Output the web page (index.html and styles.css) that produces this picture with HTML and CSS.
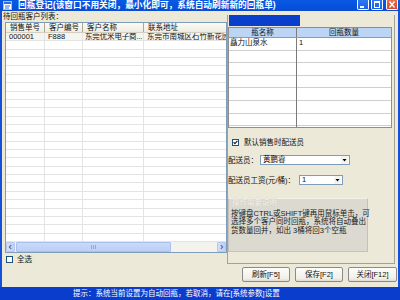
FILE: index.html
```html
<!DOCTYPE html>
<html lang="zh-CN">
  <head>
    <meta charset="utf-8">
    <title>回瓶登记</title>
    <link rel="stylesheet" href="styles.css">
  </head>
  <body>
    <div class="window">
      <div class="titlebar">
        <svg class="app-icon" viewBox="0 0 9 9">
          <rect x="0.5" y="0.5" width="8" height="8" fill="#fff" stroke="#9cc0f8"/>
          <rect x="1" y="1" width="7" height="2" fill="#2e6fe6"/>
          <path d="M2 5h5M2 7h4" stroke="#2e6fe6" stroke-width="1"/>
        </svg>
        <div class="title">回瓶登记(该窗口不用关闭，最小化即可，系统自动刷新新的回瓶单)</div>
        <div class="caption-buttons">
          <div class="cap-btn">
            <svg viewBox="0 0 10 8"><rect x="2" y="5" width="4" height="2" fill="#fff"/></svg>
          </div>
          <div class="cap-btn">
            <svg viewBox="0 0 10 8"><rect x="2.5" y="0.5" width="5" height="6" fill="none" stroke="#fff"/><rect x="2" y="0" width="6" height="2" fill="#fff"/></svg>
          </div>
          <div class="cap-btn close">
            <svg viewBox="0 0 10 8"><path d="M2.5 0.5l5 6M7.5 0.5l-5 6" stroke="#fff" stroke-width="1.4"/></svg>
          </div>
        </div>
      </div>

      <div class="frame">
        <div class="panes">
          <div class="left">
            <div class="list-label">待回瓶客户列表：</div>
            <div class="listview">
              <div class="lv-head">
                <div class="lv-col">销售单号</div>
                <div class="lv-col">客户编号</div>
                <div class="lv-col">客户名称</div>
                <div class="lv-col">联系地址</div>
              </div>
              <div class="lv-body">
                <div class="lv-row">
                  <div class="lv-cell">000001</div>
                  <div class="lv-cell">F888</div>
                  <div class="lv-cell lv-cell-short">东莞优米电子商...</div>
                  <div class="lv-cell">东莞市南城区石竹新花园</div>
                </div>
              </div>
              <div class="hscroll">
                <div class="sb-btn">
                  <svg viewBox="0 0 9 9"><path d="M5.5 2L3 4.5 5.5 7" fill="none" stroke="#4d6185" stroke-width="1.3"/></svg>
                </div>
                <div class="sb-thumb"><span class="grip"></span></div>
                <div class="sb-track"></div>
                <div class="sb-btn">
                  <svg viewBox="0 0 9 9"><path d="M3.5 2L6 4.5 3.5 7" fill="none" stroke="#4d6185" stroke-width="1.3"/></svg>
                </div>
              </div>
            </div>
            <label class="check-row select-all">
              <span class="checkbox"></span>全选
            </label>
          </div>

          <div class="right">
            <div class="grid-caption"></div>
            <div class="grid">
              <div class="grid-head">
                <div class="gh-col">瓶名称</div>
                <div class="gh-col">回瓶数量</div>
              </div>
              <div class="grid-body">
                <div class="grid-row">
                  <div class="gr-cell">矗力山泉水</div>
                  <div class="gr-cell">1</div>
                </div>
              </div>
            </div>

            <label class="check-row default-check">
              <span class="checkbox">
                <svg viewBox="0 0 5 5"><path d="M0.6 2.2l1.3 1.4L4.4 0.9" fill="none" stroke="#1a1a1a" stroke-width="1.1"/></svg>
              </span>默认销售时配送员
            </label>

            <div class="field field-driver">
              <span class="field-label">配送员：</span>
              <div class="combo combo-wide">
                <span class="combo-value">黄鹏睿</span>
                <span class="combo-btn"><svg viewBox="0 0 7 8"><path d="M1.5 3h4L3.5 5.5z" fill="#000"/></svg></span>
              </div>
            </div>

            <div class="field field-wage">
              <span class="field-label">配送员工资(元/桶)：</span>
              <div class="combo combo-narrow">
                <span class="combo-value">1</span>
                <span class="combo-btn"><svg viewBox="0 0 7 8"><path d="M1.5 3h4L3.5 5.5z" fill="#000"/></svg></span>
              </div>
            </div>

            <div class="group">
              <div class="group-title">操作简要说明</div>
              <p>按键盘CTRL或SHIFT键再用鼠标单击，可<br>选择多个客户同时回瓶，系统将自动叠出<br>货数量回并，如出 3桶将回3个空瓶</p>
            </div>
          </div>
        </div>

        <div class="actions">
          <button class="btn">刷新[F5]</button>
          <button class="btn">保存[F2]</button>
          <button class="btn btn-close">关闭[F12]</button>
        </div>
      </div>

      <div class="statusbar">提示：系统当前设置为自动回瓶，若取消，请在[系统参数]设置</div>
    </div>
  </body>
</html>
```

FILE: styles.css
```css
* {
  box-sizing: border-box;
}

html, body {
  margin: 0;
  padding: 0;
}

body {
  font: 7.5px/1.2 "Liberation Sans", "Noto Sans CJK SC", sans-serif;
  color: #111;
}

.window {
  width: 400px;
  height: 300px;
  display: flex;
  flex-direction: column;
  background: #ece9d8;
  overflow: hidden;
}

/* title bar */

.titlebar {
  height: 11px;
  flex: none;
  display: flex;
  align-items: flex-start;
  padding: 0 2px 0 3px;
  background: linear-gradient(#0b58e2, #0653de 50%, #0a4bd2);
  color: #fff;
  font-weight: bold;
  font-size: 8.7px;
  line-height: 10px;
}

.app-icon {
  width: 9px;
  height: 9px;
  margin: 1px 6px 0 0;
  flex: none;
}

.title {
  flex: 1;
  white-space: nowrap;
  overflow: hidden;
}

.caption-buttons {
  display: flex;
  gap: 2px;
}

.cap-btn {
  width: 12px;
  height: 10px;
  border: 1px solid #fff;
  border-top: 0;
  border-radius: 0 0 2px 2px;
  background: linear-gradient(#2f78f4, #1a5ee6);
}

.cap-btn svg {
  display: block;
  width: 10px;
  height: 8px;
  margin-top: 1px;
}

.cap-btn.close {
  margin-left: 1px;
  background: linear-gradient(#e8704f, #d94a26);
}

/* window body */

.frame {
  flex: 1;
  display: flex;
  flex-direction: column;
  border-left: 2px solid #1550d8;
  border-right: 2px solid #1550d8;
}

.panes {
  height: 253px;
  display: flex;
}

.left {
  width: 225px;
  padding-left: 3px;
  display: flex;
  flex-direction: column;
}

.list-label {
  height: 11px;
  line-height: 11px;
  margin-left: -2px;
}

.listview {
  height: 231px;
  border: 1px solid #7f9db9;
  background: #fff;
  display: flex;
  flex-direction: column;
  overflow: hidden;
}

.lv-head,
.lv-row {
  display: grid;
  grid-template-columns: 39px 38px 61px 100px;
  white-space: nowrap;
}

.lv-head {
  height: 10px;
  flex: none;
  background: linear-gradient(#fbfaf4, #efede2);
  border-bottom: 1px solid #d2cfc0;
  line-height: 9px;
}

.lv-col {
  padding-left: 4px;
  border-right: 1px solid #aca899;
  overflow: hidden;
}

.lv-body {
  flex: 1;
  background:
    linear-gradient(#e4e4e4, #e4e4e4) 38px 0 / 1px 100% no-repeat,
    linear-gradient(#e4e4e4, #e4e4e4) 76px 0 / 1px 100% no-repeat,
    linear-gradient(#e4e4e4, #e4e4e4) 137px 0 / 1px 100% no-repeat,
    repeating-linear-gradient(transparent 0 7.36px, #e4e4e4 7.36px 8.36px);
}

.lv-row {
  height: 8.36px;
  line-height: 8px;
  background: #f5f4ef;
  border-bottom: 1px solid #e4e4e4;
}

.lv-cell {
  padding-left: 3px;
  border-right: 1px solid #e4e4e4;
  overflow: hidden;
}

.lv-cell-short {
  padding-left: 2px;
  letter-spacing: -0.15px;
}

.hscroll {
  height: 10px;
  flex: none;
  display: flex;
  background: #f3f2ec;
}

.sb-btn {
  width: 9px;
  background: linear-gradient(90deg, #d4e0fa, #bccff6);
  border: 1px solid #b6c9f2;
  border-radius: 1px;
}

.sb-btn svg {
  display: block;
  width: 7px;
  height: 8px;
}

.sb-thumb {
  width: 155px;
  margin-left: 1px;
  background: linear-gradient(#cad9f8, #bcd0f5);
  border: 1px solid #a9c0ef;
  border-radius: 1px;
  display: flex;
  justify-content: center;
  align-items: center;
}

.grip {
  width: 5px;
  height: 4px;
  background: repeating-linear-gradient(90deg, #8fa9e0 0 1px, transparent 1px 2px);
}

.sb-track {
  flex: 1;
}

.check-row {
  display: flex;
  align-items: center;
}

.checkbox {
  width: 7px;
  height: 7px;
  border: 1px solid #1c5180;
  background: #fff;
  flex: none;
}

.checkbox svg {
  display: block;
  width: 5px;
  height: 5px;
}

.select-all {
  height: 11px;
  padding: 1px 0 0 1px;
  gap: 4px;
}

/* right side */

.right {
  width: 168px;
  margin-top: 4px;
  height: 249px;
  border: 1px solid #a5a294;
  border-top: 0;
  padding-right: 2px;
  display: flex;
  flex-direction: column;
}

.grid-caption {
  width: 71px;
  height: 11px;
  margin-left: 1px;
  background: #0a3fcc;
}

.grid {
  margin-top: 1px;
  height: 101px;
  border: 1px solid #8e8e8e;
  background: #fff;
  display: flex;
  flex-direction: column;
}

.grid-head,
.grid-row {
  display: grid;
  grid-template-columns: 68px 1fr;
}

.grid-head {
  height: 10px;
  line-height: 9px;
  background: #bdd5f5;
  border-bottom: 1px solid #9a9a9a;
  text-align: center;
}

.gh-col:first-child {
  border-right: 1px solid #7b7b7b;
}

.grid-body {
  flex: 1;
  background:
    linear-gradient(#7b7b7b, #7b7b7b) 67px 0 / 1px 100% no-repeat,
    repeating-linear-gradient(transparent 0 11.6px, #cfcfcf 11.6px 12.6px);
}

.grid-row {
  height: 12.6px;
  line-height: 9px;
}

.gr-cell {
  padding-left: 1px;
}

.gr-cell:last-child {
  padding-left: 2px;
}

.default-check {
  margin-top: 10px;
  height: 9px;
  padding-left: 4px;
  gap: 5px;
}

.field {
  display: flex;
  align-items: center;
  height: 10px;
}

.field-driver {
  margin-top: 8px;
}

.field-wage {
  margin-top: 10px;
}

.field-driver .field-label {
  width: 32px;
}

.field-wage .field-label {
  width: 71px;
}

.combo {
  height: 10px;
  display: flex;
  border: 1px solid #7f9db9;
  background: #fff;
}

.combo-wide {
  width: 90px;
}

.combo-narrow {
  width: 44px;
}

.combo-value {
  flex: 1;
  padding-left: 2px;
  line-height: 8px;
}

.combo-btn {
  width: 7px;
  margin-right: 1px;
  background: #f4f4f0;
}

.combo-btn svg {
  display: block;
  width: 7px;
  height: 8px;
}

.group {
  margin-top: 13px;
  width: 140px;
  height: 54px;
  padding: 0 2px;
  border: 1px solid #c6c3b6;
  border-top-color: #f2f1ea;
  background: #dcdad0;
}

.group-title {
  padding-left: 1px;
  line-height: 8px;
  color: #f8f7f2;
  text-shadow: 0 0 1px #b8b6aa;
}

.group p {
  margin: 3px 0 0;
  line-height: 8.4px;
  white-space: nowrap;
  color: #1a1a1a;
}

/* bottom buttons */

.actions {
  flex: 1;
  display: flex;
  justify-content: flex-end;
  align-items: flex-start;
  gap: 5px;
  padding: 3px 1px 0 0;
}

.btn {
  width: 48px;
  height: 15px;
  padding: 0;
  font: inherit;
  color: #111;
  border: 1px solid #8a8a8a;
  border-radius: 2px;
  background: linear-gradient(#fdfdfb, #f0efe8 80%, #dedbd0);
}

.btn-close {
  width: 49px;
}

.statusbar {
  height: 13px;
  flex: none;
  padding-left: 73px;
  line-height: 13px;
  background: #0b3dcc;
  color: #fff;
  white-space: nowrap;
}
```
